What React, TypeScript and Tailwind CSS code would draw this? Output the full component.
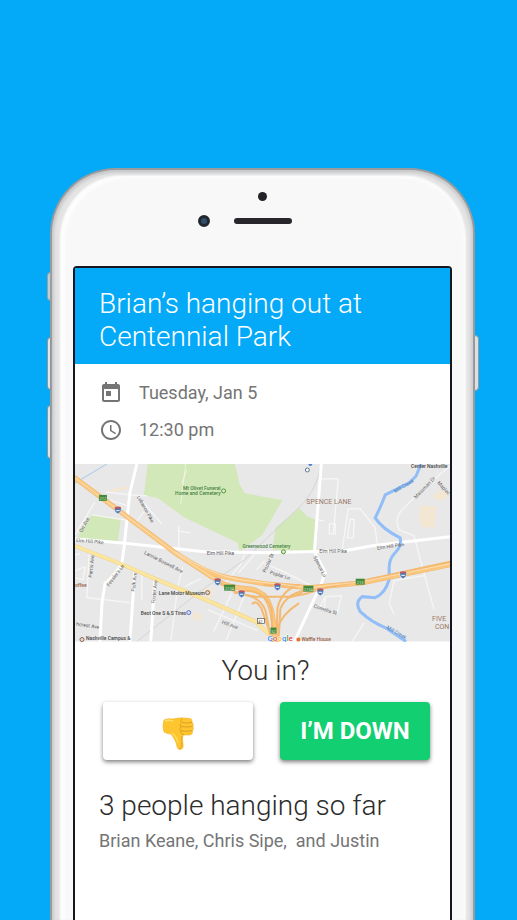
import React from "react";
import { MdToday, MdAccessTime } from "react-icons/md";

function Shield({ x, y }: { x: number; y: number }) {
  return (
    <g transform={`translate(${x} ${y})`}>
      <path d="M-3 -3 Q0 -4 3 -3 Q4.500 2 0 4 Q-4.500 2 -3 -3Z" fill="#4d78b8" stroke="#fff" strokeWidth=".5" />
      <path d="M-3 -3 Q0 -4 3 -3 L3.300 -1.500 H-3.300Z" fill="#c8574f" />
      <path d="M-1.800 .7 H1.800" stroke="#dce6f5" strokeWidth="1.200" />
    </g>
  );
}

function Exit({ x, y, w, label }: { x: number; y: number; w: number; label: string }) {
  return (
    <g>
      <rect x={x - w / 2} y={y - 3} width={w} height="6" fill="#438a3c" />
      <text x={x} y={y + 2} fontSize="4" fill="#d8ecd3" textAnchor="middle">{label}</text>
    </g>
  );
}

function ParkMap() {
  return (
    <svg viewBox="0 0 376 178" className="block w-full" role="img" aria-label="Map of the meeting place" fontFamily="Roboto, sans-serif">
      <rect width="376" height="178" fill="#e8e8e8" />
      <g fill="#d3e8b8">
        <path d="M73 0H160L163 11 165 20 170 29 190 33 208 36 188 71 172 83 165 88 163 79 110 54 83 34 69 31Z" />
        <path d="M225 44L232 52 241 56 240 88 198 86 201 64Z" />
        <path d="M17 51L46 55 43 78 2 74Z" />
      </g>
      <g fill="#f3e6d2">
        <path d="M346 42H362L361 60 363 63 349 64 345 56Z" />
        <path d="M358 32L366 26 374 29 373 34 364 37Z" />
        <path d="M119 148L128 151 125 158 117 154Z" />
        <path d="M130 124L139 126 137 135 127 131Z" />
        <path d="M34 26L50 22 53 25 36 29Z" />
      </g>
      <g fill="none" stroke="#f6f6f6" strokeWidth="1.300">
        <path d="M31 28L55 31 72 32" /><path d="M62 31L68 38 87 60" /><path d="M35 36L53 42 M70 47L62 57" />
        <path d="M20 38L0 71 M17 51L50 56" /><path d="M104 62L104 84 M103 67L116 69" />
        <path d="M107 20L112 6 M106 40L111 0" strokeWidth=".7" />
        <path d="M247 15H264L259 70 M244 56L250 57 M255 60V70H261V60Z" />
        <path d="M268 85L274 45 286 45 301 64 303 80" /><path d="M276 55L280 56 279 74 273 74Z" />
        <path d="M376 2L350 24 331 43Q319 53 325 66L340 72 345 91 360 146" />
        <path d="M350 112L320 117 315 140 320 151" />
        <path d="M251 133L267 132 263 150 250 147Z M245 145L251 133" />
        <path d="M290 159L278 178 M180 91L164 109 M190 97L182 106" />
        <path d="M14 91L12 134 55 139 M67 108V137 M108 103L103 123 96 178 M126 115L110 123" />
        <path d="M157 130L139 168 M169 134L152 176 M133 146L183 167 M151 119L166 101 170 91" />
        <path d="M0 107L10 103 8 116 0 114 M0 91L5 90 M190 100L205 106 235 121" />
      </g>
      <g fill="none" stroke="#d2d4d5" strokeWidth="1">
        <path d="M62 178L125 128 170 96 220 48Q242 30 247 0" />
      </g>
      <g fill="none" stroke="#fff" strokeWidth="3">
        <path d="M0 75L55 80 130 88 190 89 271 87 298 82 376 73" />
        <path d="M62 0L55 29 49 85 47 99Q42 110 30 120 L27 140 25 178" />
        <path d="M60 108L55 178 M80 116L76 178" />
        <path d="M247 0L240 88 251 109 246 122 220 178" />
      </g>
      <path d="M347 0L342 12 335 19Q323 25 311 31Q307 42 301 54Q308 65 326 74Q328 82 321 89Q315 95 315 104L315 116Q311 130 301 134L288 133Q280 139 286 148Q298 159 311 164L332 178" fill="none" stroke="#91bdf8" strokeWidth="3" />
      <path d="M0 19L32 0" stroke="#a8c7ef" strokeWidth="1" />
      <g fill="none" strokeLinecap="round">
        <path d="M0 82L7 85 43 99 80 115 133 137 181 158 202 178" stroke="#eed18a" strokeWidth="4" />
        <path d="M0 82L7 85 43 99 80 115 133 137 181 158 202 178" stroke="#fce69e" strokeWidth="3" />
        <g stroke="#edb66f" strokeWidth="4">
          <path d="M0 14L43 46 103 91 143 117Q155 125 175 125Q180 125 190 132Q200 144 200 178" strokeWidth="5" />
          <path d="M96 86Q133 112 160 115L190 120 235 124 288 119 376 101" strokeWidth="5" />
        </g>
        <g stroke="#fbc77f">
          <path d="M0 14L43 46 103 91 143 117Q155 125 175 125Q180 125 190 132Q200 144 200 178" strokeWidth="4" />
          <path d="M96 86Q133 112 160 115L190 120 235 124 288 119 376 101" strokeWidth="4" />
        </g>
        <g stroke="#f3b971" strokeWidth="2">
          <path d="M143 117Q165 135 190 133H214Q230 132 250 124L288 117 376 98" />
          <path d="M190 121Q210 123 225 121Q207 126 203 145L202 178" />
          <path d="M236 126Q213 128 206 145L204 178" />
          <path d="M160 129Q185 131 191 147L197 178" />
          <path d="M171 127Q190 127 197 145L198 178" />
          <path d="M178 140Q182 136 187 145L194 165 M214 134Q225 132 230 126 M203 165Q207 151 224 140" />
        </g>
        <g stroke="#fff0d7" strokeWidth=".6">
          <path d="M0 14L43 46 103 91 143 117 M100 88Q137 111 165 116L235 124 288 118 376 100" />
        </g>
      </g>
      <Shield x={43} y={46} /><Shield x={143} y={118} /><Shield x={167} y={130} />
      <Shield x={203} y={123} /><Shield x={246} y={128} /><Shield x={329} y={111} />
      <Exit x={28} y={34} w={8} label="212" /><Exit x={155} y={124} w={11} label="213A" />
      <Exit x={234} y={125} w={10} label="213A" /><Exit x={286} y={118} w={9} label="213" />
      <Exit x={199} y={167} w={6} label="52" />
      <rect x="183" y="155" width="7" height="5" fill="#fff" stroke="#555" strokeWidth=".7" />
      <text x="186" y="159" fontSize="4" textAnchor="middle" fill="#444">41</text>
      <g fontSize="5" fill="#5c5c5c">
        <text x="1" y="78" transform="rotate(5 1 78)">Elm Hill Pike</text>
        <text x="132" y="91">Elm Hill Pike</text>
        <text x="245" y="89">Elm Hill Pike</text>
        <text x="303" y="86" transform="rotate(-8 303 86)">Elm Hill Pike</text>
        <text x="69" y="90" transform="rotate(27 69 90)">Lannie Boswell Ave</text>
        <text x="62" y="33" transform="rotate(61 62 33)">Lebanon Pike</text>
        <text x="7" y="69" transform="rotate(-61 7 69)">Orr Ave</text>
        <text x="17" y="114" transform="rotate(-84 17 114)">Parris Ave</text>
        <text x="34" y="123" transform="rotate(-53 34 123)">Fessler's Ln</text>
        <text x="60" y="128" transform="rotate(-84 60 128)">Polk Ave</text>
        <text x="80" y="140" transform="rotate(-84 80 140)">Foster Ave</text>
        <text x="1" y="162" transform="rotate(8 1 162)">hcrest Ave</text>
        <text x="147" y="160" transform="rotate(20 147 160)">Hill Ave</text>
        <text x="239" y="93" transform="rotate(64 239 93)">Spence Ln</text>
        <text x="191" y="109" transform="rotate(-65 191 109)">Poplar St</text>
        <text x="195" y="110" transform="rotate(18 195 110)">Poplar Ln</text>
        <text x="239" y="144" transform="rotate(18 239 144)">Cornelia St</text>
        <text x="342" y="35" transform="rotate(-46 342 35)">Massman Dr</text>
        <text x="363" y="19" transform="rotate(48 363 19)">Maplec</text>
      </g>
      <g fontSize="5" fill="#447bb8">
        <text x="321" y="29" transform="rotate(-30 321 29)">Mill Creek</text>
        <text x="312" y="165" transform="rotate(29 312 165)">Mill Creek</text>
      </g>
      <g fontSize="5" fontWeight="500" fill="#448344">
        <text x="146" y="26" textAnchor="end">Mt Olivet Funeral</text>
        <text x="146" y="31" textAnchor="end">Home and Cemetery</text>
        <text x="168" y="84">Greenwood Cemetery</text>
      </g>
      <circle cx="149" cy="27" r="2" fill="#dceecb" stroke="#519532" />
      <circle cx="209" cy="88" r="2" fill="#dceecb" stroke="#519532" />
      <g fontSize="7" fill="#9a7964">
        <text x="232" y="40">SPENCE LANE</text>
        <text x="358" y="157">FIVE</text>
        <text x="361" y="165">CON</text>
      </g>
      <g fontSize="5" fontWeight="500" fill="#464646">
        <text x="337" y="4">Center Nashville</text>
        <text x="84" y="131">Lane Motor Museum</text>
        <text x="66" y="151">Best One S &amp; S Tires</text>
        <text x="11" y="176">Nashville Campus &amp;</text>
        <text x="227" y="177" fill="#9a6146">Waffle House</text>
        <text x="0" y="123" fill="#9a6146">offee</text>
      </g>
      <circle cx="133" cy="129" r="2" fill="#e6dad5" stroke="#876653" />
      <circle cx="114" cy="149" r="2" fill="#d8ddfb" stroke="#5e70ce" />
      <circle cx="7" cy="176" r="2" fill="#e6dad5" stroke="#876653" />
      <circle cx="233" cy="6" r="2" fill="#fff" stroke="#5c7291" />
      <circle cx="236" cy="0" r="2" fill="#537ed2" />
      <circle cx="224" cy="176" r="2" fill="#e77328" />
      <text x="193" y="177" fontSize="8" fontWeight="500" stroke="#fff" strokeWidth="1" paintOrder="stroke">
        <tspan fill="#4285f4">G</tspan><tspan fill="#ea4335">o</tspan><tspan fill="#fbbc05">o</tspan><tspan fill="#4285f4">g</tspan><tspan fill="#34a853">l</tspan><tspan fill="#ea4335">e</tspan>
      </text>
    </svg>
  );
}

function ThumbsDown() {
  return (
    <svg viewBox="0 0 32 34" className="h-[34px] w-8" aria-hidden="true">
      <path d="M2 3Q6 1 11 2Q18 0 28 1.500Q30.500 2 30 5Q32 7 31 9Q32 12 30.500 14Q31 18 27 18L21 18Q20 21 21 27Q22 32 18 32.500Q15 32.500 14.500 27Q13 22 9 17Q5 17 2 15Q0 9 2 3Z" fill="#fdc62e" stroke="#f0b02c" strokeWidth=".6" />
      <path d="M3 4Q7 2.500 11 4" fill="none" stroke="#ffdf65" strokeWidth="1.500" />
      <path d="M20 5.500Q24 6.500 30 5.500M19 9.500Q24 10.500 30.500 9.500M19 13.700Q24 14.700 30 13.700M20 2Q17 4 20 5.500Q16.500 7.500 19 9.500Q16.500 11.500 19 13.700Q18 17 22 17.700" fill="none" stroke="#dc9025" strokeWidth=".8" />
      <path d="M10 16Q15 20 16 26" fill="none" stroke="#ffdc57" strokeWidth="1.500" />
      <path d="M20 19Q19 23 20 29Q19 32 17 32" fill="none" stroke="#eaa323" strokeWidth="1" />
    </svg>
  );
}

export default function App() {
  return (
    <main className="flex min-h-screen flex-col bg-[#04a9f7] pt-[168px] pr-[42px] pl-[50px] font-['Roboto',sans-serif]">
      <div className="relative flex flex-1 flex-col">
        <span className="absolute top-[104px] -left-[3px] h-[29px] w-1 rounded-l-sm border border-[#8fa2ad] bg-[#c5cdd1]" />
        <span className="absolute top-[169px] -left-[3px] h-[53px] w-1 rounded-l-sm border border-[#8b969d] bg-[#e2e4e5]" />
        <span className="absolute top-[237px] -left-[3px] h-[54px] w-1 rounded-l-sm border border-[#8b969d] bg-[#e2e4e5]" />
        <span className="absolute top-[167px] -right-[4px] h-[56px] w-[5px] rounded-r-sm border border-[#929a9e] bg-[#dddfe0]" />
        <div className="flex flex-1 flex-col rounded-t-[66px] border-2 border-b-0 border-[#999b9d] bg-[#f8f8f8] px-[21px] shadow-[inset_2px_2px_3px_#c8c9ca,inset_-2px_2px_3px_#cccdce,inset_8px_5px_2px_#e4e4e5,inset_-7px_5px_2px_#e4e4e5,inset_13px_8px_3px_#fdfdfd,inset_-9px_8px_3px_#fcfcfc]">
          <div className="grid h-24 shrink-0 grid-cols-[1fr_58px_1fr] grid-rows-[45px_12px] items-center">
            <i className="col-start-2 row-start-1 mt-[7px] h-[9px] w-[9px] justify-self-center rounded-full bg-[#222326]" />
            <i className="col-start-1 row-start-2 mr-6 h-3 w-3 justify-self-end rounded-full border-3 border-[#22272d] bg-[#304d6b]" />
            <i className="col-start-2 row-start-2 h-[6px] rounded-full bg-[#29262b]" />
          </div>
          <section className="flex flex-1 flex-col rounded-t-sm border-2 border-b-0 border-[#14171d] bg-white text-[#2c2c2c]">
            <header className="bg-[#04a9f7] px-6 pt-[19px] pb-[11px]">
              <h1 className="text-[28px] leading-[33px] font-light text-white">Brian’s hanging out at Centennial Park</h1>
            </header>
            <div className="flex flex-col gap-[13px] px-6 pt-[17px] pb-[22px] text-lg leading-6 text-[#757575]">
              <div className="flex items-center gap-4"><MdToday className="size-6" aria-hidden="true" /><time>Tuesday, Jan 5</time></div>
              <div className="flex items-center gap-4"><MdAccessTime className="size-6" aria-hidden="true" /><time>12:30 pm</time></div>
            </div>
            <ParkMap />
            <h2 className="mt-3 pl-[6px] text-center text-[28px] leading-[33px] font-light">You in?</h2>
            <div className="mt-[15px] grid grid-cols-2 gap-[27px] pr-5 pl-7">
              <button aria-label="Not going" className="flex h-[58px] items-end justify-center rounded bg-white pb-[9px] shadow-[0_2px_4px_rgba(0,0,0,0.5)]"><ThumbsDown /></button>
              <button className="h-[58px] rounded bg-[#12cf71] text-2xl font-bold whitespace-nowrap text-white shadow-[0_2px_4px_rgba(0,0,0,0.5)]">I’M DOWN</button>
            </div>
            <div className="px-6 pt-[29px]">
              <h2 className="text-[28px] leading-[33px] font-light">3 people hanging so far</h2>
              <p className="mt-[7px] text-lg leading-6 whitespace-pre-wrap text-[#757575]">{"Brian Keane, Chris Sipe,  and Justin"}</p>
            </div>
          </section>
        </div>
      </div>
    </main>
  );
}
